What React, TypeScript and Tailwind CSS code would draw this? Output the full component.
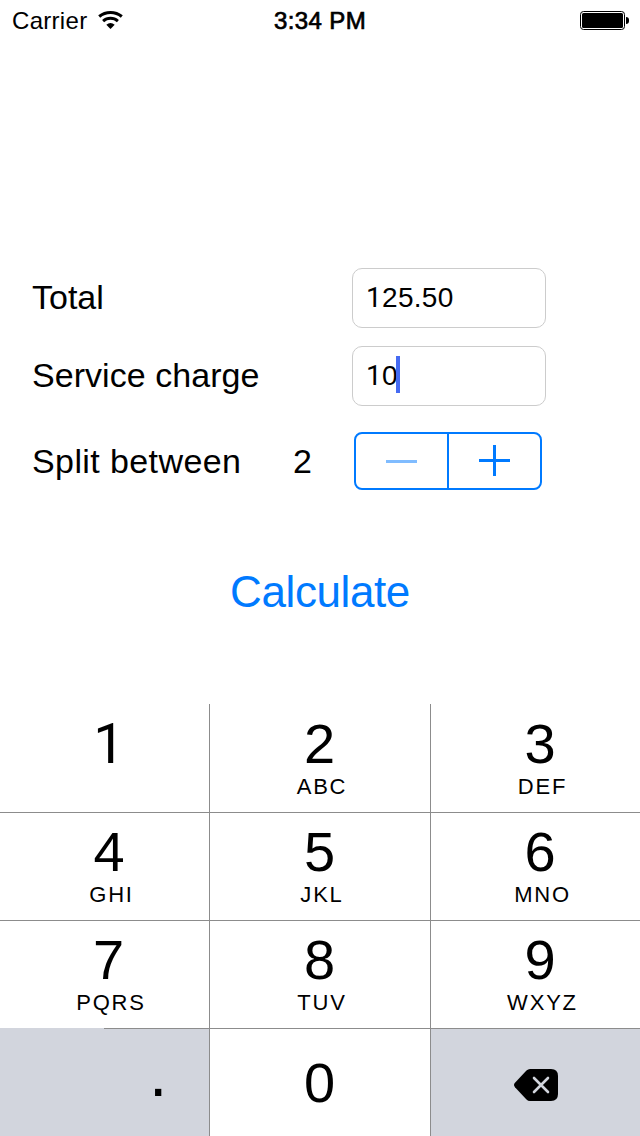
import type { ReactNode } from "react";

const One = () => <span className="font-[Roboto] leading-none">1</span>;

function Wifi() {
  return (
    <svg width="26" height="20" viewBox="0 0 26 20" fill="none" stroke="#000" className="ml-[11px] mt-2.5">
      <path d="M1.2 6.5A18 18 0 0 1 23.8 6.5" strokeWidth="3.1" />
      <path d="M5.100 11.100A11.200 11.200 0 0 1 19.900 11.100" strokeWidth="3" />
      <path d="M8.300 14.700A6.600 6.600 0 0 1 16.700 14.700L12.500 19Z" fill="#000" stroke="none" />
    </svg>
  );
}

function Battery() {
  return (
    <div className="flex items-center gap-px">
      <div className="h-[19px] w-[45px] rounded-[3.5px] border border-black p-px">
        <div className="h-full w-full rounded-[1.5px] bg-black" />
      </div>
      <div className="h-[7px] w-[3px] rounded-r-[3px] bg-black" />
    </div>
  );
}

function StatusBar() {
  return (
    <header className="grid h-10 grid-cols-[1fr_auto_1fr] items-start text-2xl leading-10">
      <div className="flex items-start pl-3">
        <span className="pt-px tracking-[0.3px]">Carrier</span>
        <Wifi />
      </div>
      <div className="pt-px tracking-[0.4px] [-webkit-text-stroke:0.7px_black]">3:34 PM</div>
      <div className="flex justify-end pr-[11px] pt-[11px]">
        <Battery />
      </div>
    </header>
  );
}

function Field({ children, focused = false }: { children: ReactNode; focused?: boolean }) {
  return (
    <div className="flex h-[60px] w-[194px] items-center rounded-[10px] border border-[#cccccc] bg-white pl-[13px] text-[28px] tracking-[0.3px]">
      <span>{children}</span>
      {focused && <div className="mb-[3px] -ml-[2px] h-[37px] w-1 bg-[#466bf2]" />}
    </div>
  );
}

function Stepper() {
  return (
    <div className="flex h-[58px] w-[188px] rounded-[8px] border-2 border-[#007aff]">
      <button className="flex w-[93px] items-center justify-center border-r-2 border-[#007aff]">
        <svg width="31" height="31" viewBox="0 0 31 31">
          <path d="M0 14h31v3H0z" fill="#80bcff" />
        </svg>
      </button>
      <button className="flex flex-1 items-center justify-center">
        <svg width="31" height="31" viewBox="0 0 31 31" className="mb-px">
          <path d="M0 14h14V0h3v14h14v3H17v14h-3V17H0z" fill="#007aff" />
        </svg>
      </button>
    </div>
  );
}

type KeyProps = { digit: ReactNode; letters?: string; cell: string; line?: ReactNode };

function Key({ digit, letters, cell, line }: KeyProps) {
  return (
    <div className={"flex flex-col " + cell}>
      <div className="flex flex-1 flex-col items-center">
        <div className="text-[56px] leading-[56px]">{digit}</div>
        {letters && <div className="mt-1 pl-[5px] text-[22px] leading-[22px] tracking-[1.8px]">{letters}</div>}
      </div>
      {line}
    </div>
  );
}

function Backspace() {
  return (
    <svg width="44" height="32" viewBox="0 0 44 32">
      <path d="M16 0H37Q44 0 44 7V25Q44 32 37 32H16Q14 32 12.500 30.500L1 18.200Q-1 16 1 13.800L12.500 1.500Q14 0 16 0Z" fill="#000" />
      <path d="M20 9L34 23M34 9L20 23" stroke="#d2d5dd" strokeWidth="2.600" strokeLinecap="round" />
    </svg>
  );
}

function Keypad() {
  return (
    <div className="grid h-[432px] grid-cols-[210px_221px_209px] grid-rows-[109px_108px_108px_107px] bg-white">
      <Key digit={<One />} cell="border-b border-r border-[#8c8c8c] pt-3 pl-[9px]" />
      <Key digit="2" letters="ABC" cell="border-b border-r border-[#8c8c8c] pt-3 pr-px" />
      <Key digit="3" letters="DEF" cell="border-b border-[#8c8c8c] pt-3 pl-[9px]" />
      <Key digit="4" letters="GHI" cell="border-b border-r border-[#8c8c8c] pt-[11px] pl-[9px]" />
      <Key digit="5" letters="JKL" cell="border-b border-r border-[#8c8c8c] pt-[11px] pr-px" />
      <Key digit="6" letters="MNO" cell="border-b border-[#8c8c8c] pt-[11px] pl-[9px]" />
      <Key
        digit="7"
        letters="PQRS"
        cell="border-r border-[#8c8c8c] pt-[11px] [&>div:first-child]:pl-[8px]"
        line={
          <div className="flex h-px">
            <div className="w-[104px] bg-[#d2d5dd]" />
            <div className="flex-1 bg-[#8c8c8c]" />
          </div>
        }
      />
      <Key digit="8" letters="TUV" cell="border-b border-r border-[#8c8c8c] pt-[11px] pr-px" />
      <Key digit="9" letters="WXYZ" cell="border-b border-[#8c8c8c] pt-[11px] pl-[9px]" />
      <div className="flex border-r border-[#8c8c8c] bg-[#d2d5dd] pl-[149px] pt-[8px] text-[66px] leading-[72px]">.</div>
      <div className="flex items-center justify-center border-r border-[#8c8c8c] pr-px text-[56px] leading-none">0</div>
      <div className="flex items-start bg-[#d2d5dd] pl-[83px] pt-10">
        <Backspace />
      </div>
    </div>
  );
}

export default function App() {
  return (
    <div className="flex h-[1136px] w-[640px] flex-col bg-white font-['Liberation_Sans',Arial,sans-serif] text-black">
      <StatusBar />
      <main className="flex flex-1 flex-col pt-[228px]">
        <div className="flex h-[60px] items-center pl-8 text-[34px]">
          <div className="w-[320px] pb-[2px]">Total</div>
          <Field><One />25.50</Field>
        </div>
        <div className="mt-[18px] flex h-[60px] items-center pl-8 text-[34px]">
          <div className="w-[320px] pb-[2px] tracking-[0.05px]">Service charge</div>
          <Field focused><One />0</Field>
        </div>
        <div className="mt-[26px] flex h-[58px] items-center pl-8 text-[34px]">
          <div className="w-[261px] tracking-[0.4px]">Split between</div>
          <div className="w-[61px]">2</div>
          <Stepper />
        </div>
        <button className="mt-[70px] h-16 text-center text-[44px] leading-[64px] tracking-[-0.4px] text-[#007aff]">Calculate</button>
      </main>
      <Keypad />
    </div>
  );
}
